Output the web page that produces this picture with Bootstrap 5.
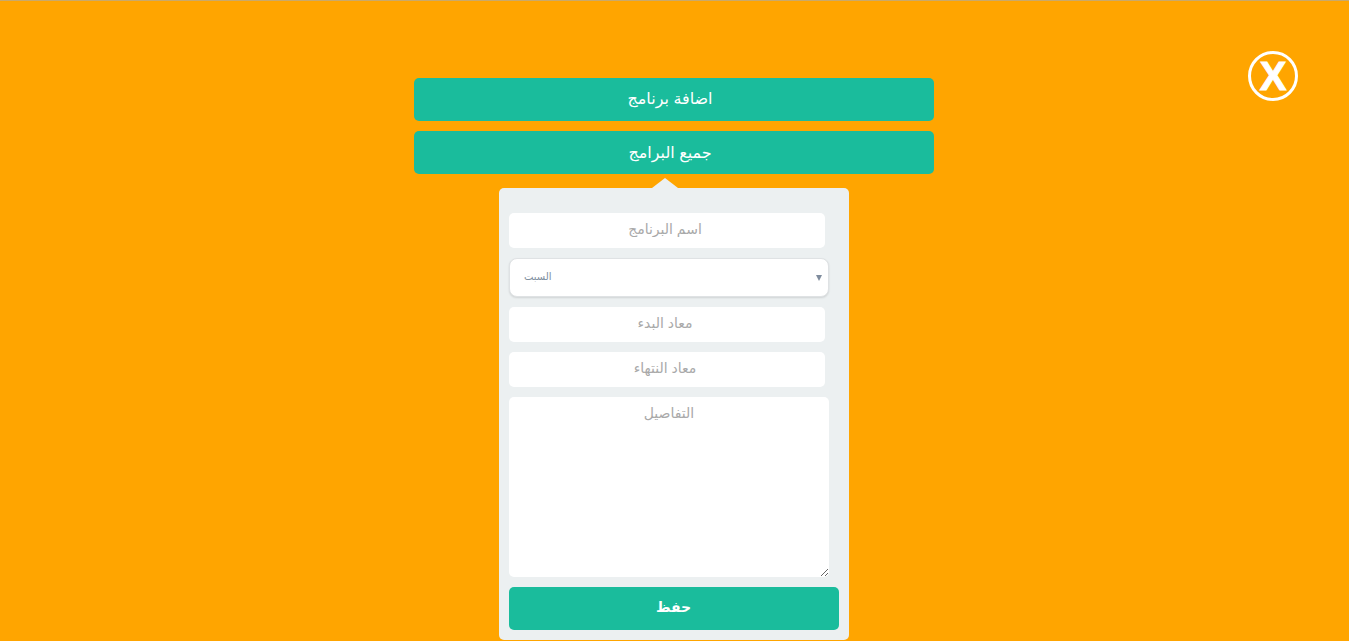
<!DOCTYPE html>
<html lang="ar">
<head>
<meta charset="utf-8">
<title>البرامج</title>
<link href="https://cdn.jsdelivr.net/npm/bootstrap@5.3.0/dist/css/bootstrap.min.css" rel="stylesheet">
<style>
html, body { height: 100%; }
body {
  background: #ffa500;
  border-top: 1px solid #c9a96a;
  font-family: "Liberation Sans", "DejaVu Sans", "Noto Sans", sans-serif;
  overflow: hidden;
}
.stage { width: 520px; margin: 77px 0 0 414px; }
.bar-btn {
  display: block; width: 100%; height: 43px; padding: 0 8px 3px 0;
  background: #1abc9c; border: 0; border-radius: 5px;
  color: #fff; font-size: 16px; line-height: 37px; text-align: center;
}
.bar-btn:hover, .bar-btn:active, .bar-btn:focus { background: #1abc9c; color: #fff; }
.bar-btn + .bar-btn { margin-top: 10px; }
.bar-btn.tall-txt { padding-bottom: 1px; }
.panel-box {
  position: relative; width: 350px; height: 452px; margin: 14px 0 0 85px;
  padding: 25px 10px 0; background: #ecf0f1; border-radius: 5px;
}
.panel-box::before {
  content: ""; position: absolute; top: -10px; left: 153px;
  border-left: 13px solid transparent; border-right: 13px solid transparent;
  border-bottom: 10px solid #ecf0f1;
}
.fld {
  display: block; width: 316px; height: 35px; margin-bottom: 10px; padding: 0 14px 4px 10px;
  background: #fff; border: 0; border-radius: 5px; outline: 0;
  font: 14px/30px "Liberation Sans", "DejaVu Sans", sans-serif;
  color: #555; text-align: center;
}
.fld::placeholder { color: #a9a9a9; opacity: 1; }
.pick {
  width: 320px; height: 39px; margin-bottom: 10px; padding: 0 26px 2px 14px;
  border: 1px solid #dfe2e4; border-radius: 8px; background-color: #fff;
  background-image: url("data:image/svg+xml,%3Csvg xmlns='http://www.w3.org/2000/svg' width='6' height='6'%3E%3Cpath d='M0 0h6L3 6z' fill='%237f8c9d'/%3E%3C/svg%3E");
  background-repeat: no-repeat; background-position: right 6px center; background-size: 6px 6px;
  box-shadow: 0 1px 2px rgba(0,0,0,.12);
  font-size: 10px; font-weight: 400; color: #7f8fa0;
}
.pick:focus { border-color: #dfe2e4; box-shadow: 0 1px 2px rgba(0,0,0,.12); }
.fld.memo { width: 320px; height: 180px; padding: 1px 10px 0; resize: vertical; }
.save-btn { width: 330px; padding: 0 1px 3px 0; font-weight: 700; font-size: 14px; }
.close-x {
  position: absolute; top: 51px; left: 1248px; width: 50px; height: 50px;
  border: 3px solid #fff; border-radius: 50%; padding: 0; background: transparent;
  color: #fff; font: 700 40px/44px "Liberation Sans", sans-serif; text-align: center;
  -webkit-text-stroke: 1px #fff;
}
</style>
</head>
<body>
<button type="button" class="close-x" aria-label="إغلاق">X</button>
<main class="stage">
  <button type="button" class="btn bar-btn">اضافة برنامج</button>
  <button type="button" class="btn bar-btn tall-txt">جميع البرامج</button>
  <form class="panel-box">
    <input class="fld" type="text" placeholder="اسم البرنامج">
    <select class="form-select pick">
      <option>السبت</option>
      <option>الأحد</option>
      <option>الاثنين</option>
      <option>الثلاثاء</option>
      <option>الأربعاء</option>
      <option>الخميس</option>
      <option>الجمعة</option>
    </select>
    <input class="fld" type="text" placeholder="معاد البدء">
    <input class="fld" type="text" placeholder="معاد النتهاء">
    <textarea class="fld memo" placeholder="التفاصيل"></textarea>
    <button type="button" class="btn bar-btn save-btn">حفظ</button>
  </form>
</main>
<script src="https://cdn.jsdelivr.net/npm/bootstrap@5.3.0/dist/js/bootstrap.bundle.min.js"></script>
</body>
</html>
